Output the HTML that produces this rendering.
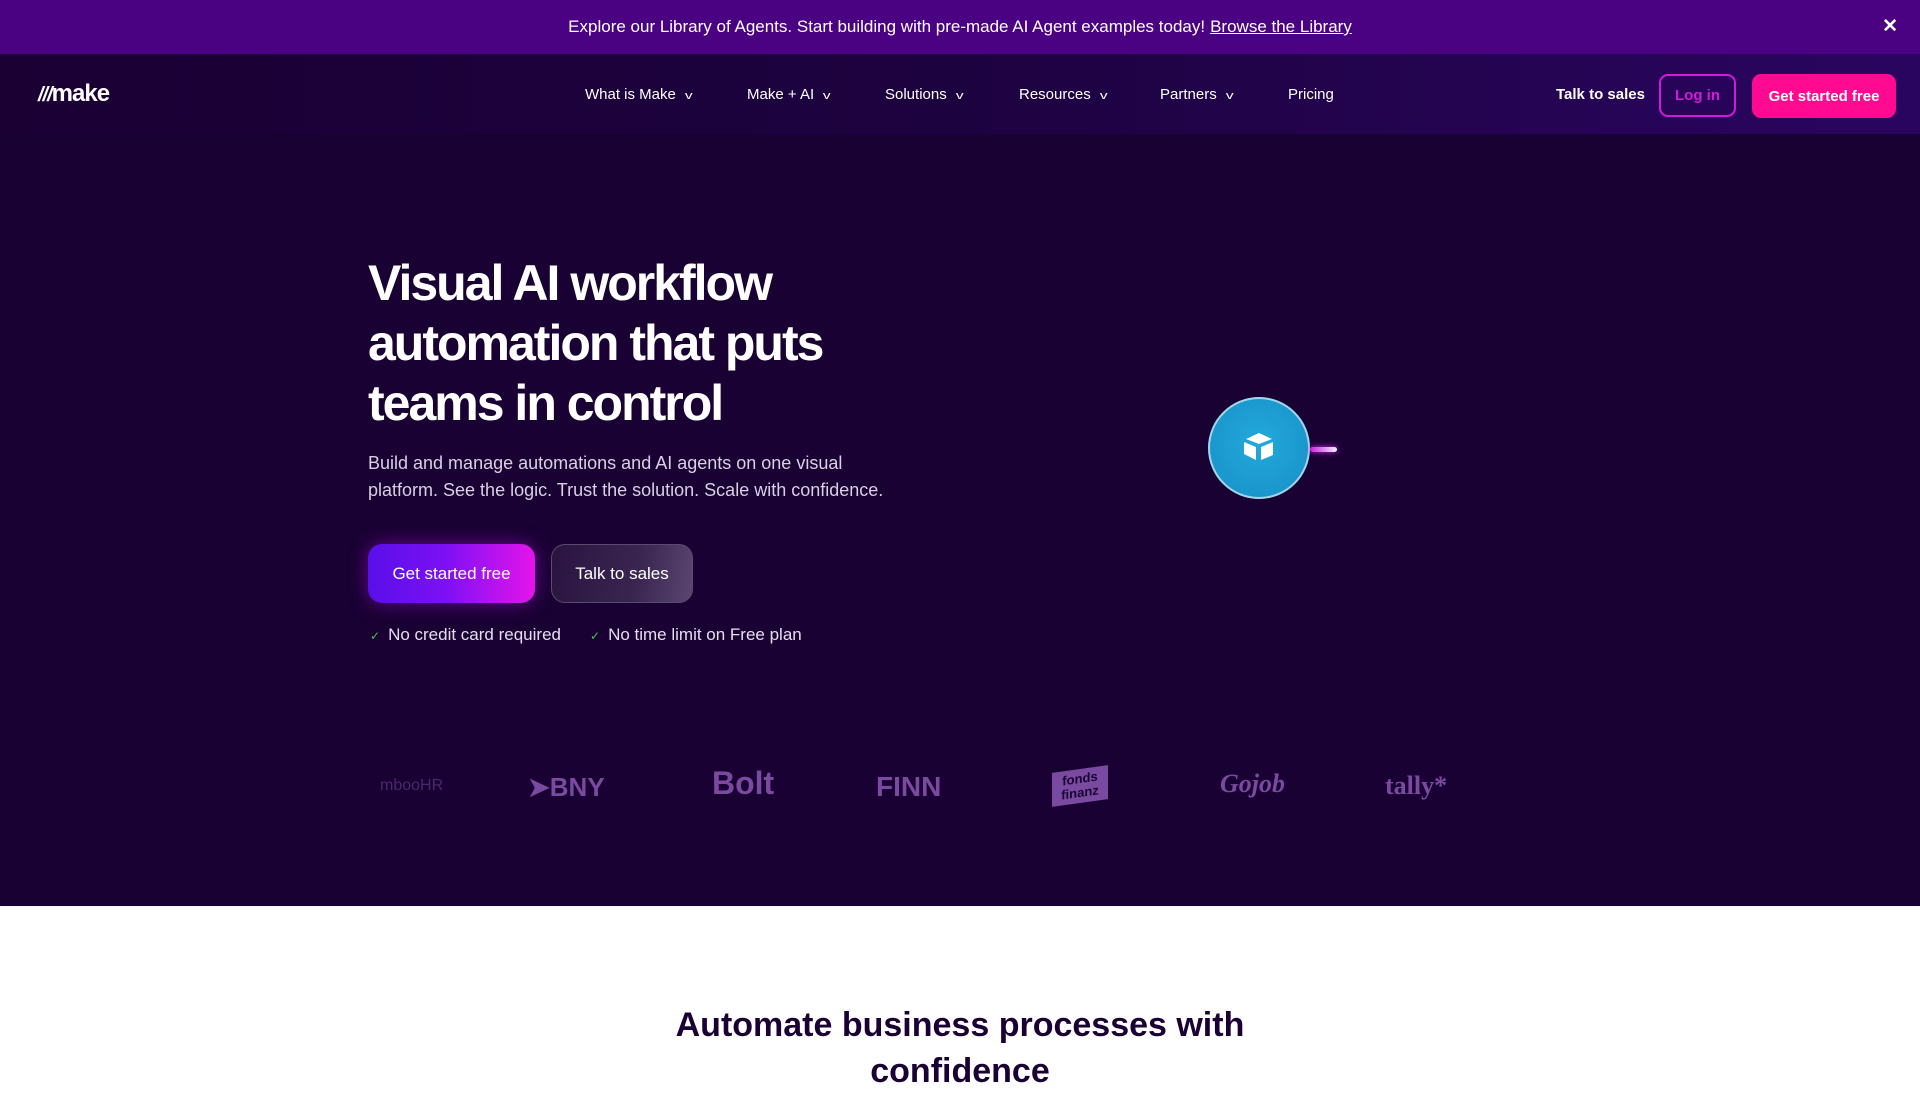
<!DOCTYPE html>
<html><head><meta charset="utf-8"><style>
*{margin:0;padding:0;box-sizing:border-box}
body{width:1920px;height:1080px;overflow:hidden;font-family:"Liberation Sans",sans-serif;background:#fff}
.banner{height:54px;background:#4a0282;color:#fff;font-size:17px;display:flex;align-items:center;justify-content:center;position:relative}
.banner u{margin-left:5px}
.banner .x{position:absolute;right:22px;top:15px;font-size:19px;font-weight:bold}
.hero{height:852px;background:#1a0133;position:relative}
.nav{height:80px;position:relative;background:linear-gradient(90deg,#1a0033 0%,#1d0240 50%,#2a0560 100%)}
.logo{position:absolute;left:38px;top:26px;color:#fff;font-weight:bold;font-size:24px;letter-spacing:-1px}
.menu span{position:absolute;top:32px;color:#fff;font-size:15px}
.menu span i{font-style:normal;font-size:11px;margin-left:10px;display:inline-block;transform:scaleX(1.4)}
.talk{position:absolute;left:1556px;top:32px;color:#fff;font-weight:bold;font-size:15px}
.login{position:absolute;left:1659px;top:20px;width:77px;height:43px;border:2px solid #d21ad8;border-radius:9px;color:#d21ad8;font-weight:bold;font-size:15px;display:flex;align-items:center;justify-content:center}
.gsf{position:absolute;left:1752px;top:20px;width:144px;height:44px;background:#ff0a91;border-radius:9px;color:#fff;font-weight:bold;font-size:15px;display:flex;align-items:center;justify-content:center}
h1{position:absolute;left:368px;top:199px;color:#fff;font-size:50px;line-height:60px;font-weight:bold;letter-spacing:-2px;width:560px}
.p{position:absolute;left:368px;top:396px;color:#d9d0e4;font-size:18px;line-height:27px;width:520px}
.b1{position:absolute;left:368px;top:490px;width:167px;height:59px;border-radius:14px;background:linear-gradient(90deg,#5a0fe8,#7a10f5 45%,#e514ea);color:#fff;font-size:17px;display:flex;align-items:center;justify-content:center;box-shadow:0 0 18px rgba(170,20,230,.5)}
.b2{position:absolute;left:551px;top:490px;width:142px;height:59px;border-radius:14px;background:linear-gradient(100deg,#2a1340,#3a2550 60%,#5a4670);border:1px solid #5a4a6e;color:#fff;font-size:17px;display:flex;align-items:center;justify-content:center}
.chk{position:absolute;top:625px;color:#e6def0;font-size:17px}
.chk b{color:#4cc34c;font-weight:normal;font-size:12px;margin-right:8px}
.logos{position:absolute;top:711px;left:0;width:1920px;color:#7a4aa0;font-weight:bold}
.logos span{position:absolute}
.circ{position:absolute;left:1208px;width:102px;height:102px;border-radius:50%;background:radial-gradient(circle at 50% 45%,#23a9dc,#168ec4);box-shadow:inset 0 0 0 2px rgba(255,255,255,.6)}
.trail{position:absolute;left:1310px;width:27px;height:5px;border-radius:3px;background:linear-gradient(90deg,#d020e0,#f0f0ff);box-shadow:0 0 6px #c030e0}
h2{position:absolute;top:1002px;width:1920px;text-align:center;font-size:34px;color:#1a0033;line-height:46px;font-weight:bold}
</style></head><body>
<div class="banner">Explore our Library of Agents. Start building with pre-made AI Agent examples today! <u>Browse the Library</u><span class="x">✕</span></div>
<div class="hero">
<div class="nav">
<div class="logo"><span style="font-style:italic;font-size:20px">///</span>make</div>
<div class="menu"><span style="left:585px">What is Make<i>v</i></span><span style="left:747px">Make + AI<i>v</i></span><span style="left:885px">Solutions<i>v</i></span><span style="left:1019px">Resources<i>v</i></span><span style="left:1160px">Partners<i>v</i></span><span style="left:1288px">Pricing</span></div>
<div class="talk">Talk to sales</div>
<div class="login">Log in</div>
<div class="gsf">Get started free</div>
</div>
<h1>Visual AI workflow automation that puts teams in control</h1>
<div class="p">Build and manage automations and AI agents on one visual platform. See the logic. Trust the solution. Scale with confidence.</div>
<div class="b1">Get started free</div>
<div class="b2">Talk to sales</div>
<div class="chk" style="left:370px;top:571px"><b>✓</b>No credit card required</div>
<div class="chk" style="left:590px;top:571px"><b>✓</b>No time limit on Free plan</div>
<div class="logos">
<span style="left:380px;top:12px;font-size:16px;font-weight:normal;color:#4a2a66">mbooHR</span>
<span style="left:528px;top:7px;font-size:26px">➤BNY</span>
<span style="left:712px;top:0px;font-size:32px">Bolt</span>
<span style="left:876px;top:6px;font-size:28px">FINN</span>
<span style="left:1052px;top:4px;width:56px;height:34px;background:#7a4aa0;color:#1a0133;font-size:13px;line-height:14px;text-align:center;padding-top:3px;transform:skewY(-8deg)">fonds<br>finanz</span>
<span style="left:1220px;top:4px;font-size:26px;font-style:italic;font-family:'Liberation Serif',serif">Gojob</span>
<span style="left:1385px;top:6px;font-size:26px;font-family:'Liberation Serif',serif">tally*</span>
</div>
<div class="circ" style="top:343px"><svg width="102" height="102" viewBox="0 0 102 102"><path d="M51 36 L38 42 L51 47 L64 42Z" fill="#fff"/><path d="M36 45 L48 50 L48 63 L36 57Z" fill="#fff"/><path d="M53 50 L65 45 L65 58 L53 63Z" fill="#fff"/></svg></div>
<div class="trail" style="top:393px"></div>
</div>
<h2>Automate business processes with<br>confidence</h2>
</body></html>
